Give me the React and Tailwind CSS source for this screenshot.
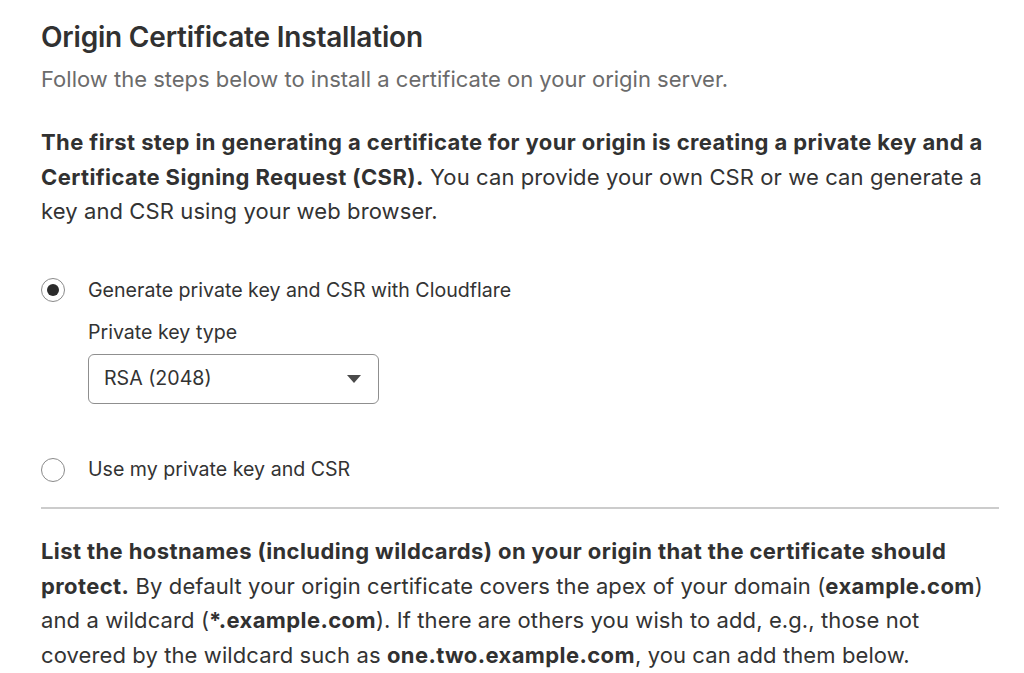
import React from 'react';

const RadioOption = ({ checked, label }) => (
    <label className="flex items-center gap-[23px] cursor-pointer">
        <span className="w-[24px] h-[24px] rounded-full border-[1.5px] border-[#8a8a8a] flex items-center justify-center bg-white">
            {checked && <span className="w-[12px] h-[12px] rounded-full bg-[#2b2b2b]" />}
        </span>
        <span className="text-[19.6px] text-[#333333]">{label}</span>
    </label>
);

const App = () => {
    const [mode, setMode] = React.useState('generate');

    return (
        <div className="min-h-screen bg-white text-[#313131] font-['Inter',sans-serif] pl-[41px] pt-[20px]">
            <div className="w-[958px]">
                {/* Header */}
                <h1 className="text-[28px] font-semibold leading-[34px] tracking-[-0.2px]">Origin Certificate Installation</h1>
                <p className="text-[22px] text-[#6b6b6b] mt-[11px] leading-[28px]">
                    Follow the steps below to install a certificate on your origin server.
                </p>

                <p className="text-[22px] leading-[34.5px] mt-[32px] text-[#333333] tracking-[0.1px]">
                    <strong className="font-bold text-[#313131] tracking-[0.4px]">The first step in generating a certificate for your origin is creating a private key and a Certificate Signing Request (CSR).</strong>{' '}
                    You can provide your own CSR or we can generate a key and CSR using your web browser.
                </p>

                <div className="mt-[47px]" onClick={() => setMode('generate')}>
                    <RadioOption checked={mode === 'generate'} label="Generate private key and CSR with Cloudflare" />
                </div>

                <div className="pl-[47px] mt-[13px]">
                    <div className="text-[19.6px] leading-[28px] text-[#333333]">Private key type</div>
                    <div className="mt-[8px] w-[291px] h-[50px] border border-[#8f8f8f] rounded-[6px] flex items-center justify-between pl-[15px] pr-[17px]">
                        <span className="text-[19.6px] text-[#333333]">RSA (2048)</span>
                        <svg width="14" height="8" viewBox="0 0 14 8">
                            <path d="M0 0 L14 0 L7 8 Z" fill="#4a4a4a" />
                        </svg>
                    </div>
                </div>

                <div className="mt-[51px]" onClick={() => setMode('own')}>
                    <RadioOption checked={mode === 'own'} label="Use my private key and CSR" />
                </div>

                <hr className="mt-[23px] border-0 h-[2px] bg-[#cccccc]" />

                <p className="text-[22px] leading-[34.5px] mt-[25px] text-[#333333] tracking-[0.1px]">
                    <strong className="font-bold text-[#313131] tracking-[0.4px]">List the hostnames (including wildcards) on your origin that the certificate should protect.</strong>{' '}
                    By default your origin certificate covers the apex of your domain (<strong className="font-bold text-[#313131] tracking-[0.4px]">example.com</strong>) and a wildcard (<strong className="font-bold text-[#313131] tracking-[0.4px]">*.example.com</strong>). If there are others you wish to add, e.g., those not covered by the wildcard such as <strong className="font-bold text-[#313131] tracking-[0.4px]">one.two.example.com</strong>, you can add them below.
                </p>
            </div>
        </div>
    );
};

export default App;
